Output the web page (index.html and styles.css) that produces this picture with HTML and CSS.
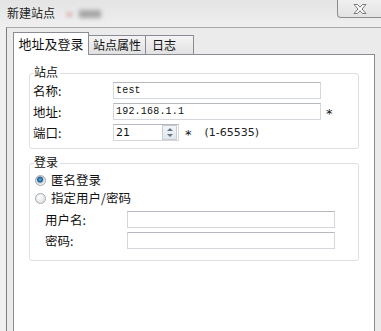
FILE: index.html
```html
<!DOCTYPE html>
<html lang="zh-CN">
  <head>
    <meta charset="UTF-8" />
    <meta name="viewport" content="width=device-width, initial-scale=1.0" />
    <title>新建站点</title>
    <link rel="stylesheet" href="styles.css">
  </head>
  <body>
    <div class="titlebar">
      <span class="title">新建站点</span>
      <span class="smudge"><i class="red"></i><i class="grey"></i></span>
      <div class="close">
        <svg width="16" height="12" viewBox="0 0 16 12">
          <path d="M2 1.5 L5.5 1.5 L8 4.2 L10.5 1.5 L14 1.5 L10 6 L14 10.5 L10.5 10.5 L8 7.8 L5.5 10.5 L2 10.5 L6 6 Z"
            fill="#fafafa" stroke="#7a7a7a" stroke-width="1" stroke-linejoin="round" />
        </svg>
      </div>
    </div>

    <div class="frame">
      <div class="tabs">
        <div class="tab active">地址及登录</div>
        <div class="tab site-tab">站点属性</div>
        <div class="tab log-tab">日志</div>
      </div>

      <div class="pane">
        <div class="group site">
          <div class="group-title">站点</div>
          <div class="row">
            <span class="label">名称:</span>
            <div class="field mono">test</div>
          </div>
          <div class="row">
            <span class="label">地址:</span>
            <div class="field mono">192.168.1.1</div>
            <span class="star">*</span>
          </div>
          <div class="row">
            <span class="label">端口:</span>
            <div class="field port">
              <span>21</span>
              <div class="spin">
                <span class="up"></span>
                <span class="down"></span>
              </div>
            </div>
            <span class="star port-star">*</span>
            <span class="range">(1-65535)</span>
          </div>
        </div>

        <div class="group login">
          <div class="group-title">登录</div>
          <div class="radio-row">
            <span class="radio checked"></span>
            <span>匿名登录</span>
          </div>
          <div class="radio-row">
            <span class="radio"></span>
            <span>指定用户/密码</span>
          </div>
          <div class="sub">
            <div class="row">
              <span class="label sub-label">用户名:</span>
              <div class="field"></div>
            </div>
            <div class="row">
              <span class="label sub-label">密码:</span>
              <div class="field"></div>
            </div>
          </div>
        </div>
      </div>
    </div>
  </body>
</html>
```

FILE: styles.css
```css
body {
  margin: 0;
  width: 381px;
  height: 331px;
  overflow: hidden;
  background-color: #f0f0f0;
  font-family: "Noto Sans CJK SC", "DejaVu Sans", sans-serif;
  font-size: 12px;
  color: #111;
}

.titlebar {
  display: flex;
  align-items: flex-start;
  height: 27px;
  background: linear-gradient(#e4e4e4, #efefef);
}

.title {
  margin: 5px 0 0 7px;
  line-height: 16px;
  color: #222;
}

.smudge {
  display: flex;
  align-items: center;
  gap: 7px;
  margin: 10px 0 0 12px;
  filter: blur(2px);
}

.smudge .red {
  width: 5px;
  height: 3px;
  background: #d88c8c;
}

.smudge .grey {
  width: 22px;
  height: 8px;
  background: #a5a5a5;
}

.close {
  display: flex;
  align-items: center;
  justify-content: center;
  margin-left: auto;
  width: 43px;
  height: 17px;
  border-left: 1px solid #8c8c8c;
  border-bottom: 1px solid #8c8c8c;
  border-bottom-left-radius: 4px;
  background: linear-gradient(#f0f0f0, #e2e2e2);
}

.frame {
  margin-left: 6px;
  padding-left: 6px;
  border-left: 1px solid #7d7d7d;
  border-top: 1px solid #a8a8a8;
  background: #ebebeb;
}

.tabs {
  display: flex;
  align-items: flex-end;
  height: 26px;
}

.tab {
  height: 19px;
  line-height: 18px;
  padding: 0 2px;
  border: 1px solid #898c95;
  border-bottom: none;
  border-left: none;
  background: linear-gradient(#f4f4f4, #e1e1e1);
  text-align: center;
  box-sizing: border-box;
}

.tab.active {
  position: relative;
  z-index: 1;
  width: 76px;
  height: 23px;
  line-height: 22px;
  margin-bottom: -1px;
  border-left: 1px solid #898c95;
  background: #fff;
  font-size: 13px;
}

.site-tab {
  width: 57px;
}

.log-tab {
  width: 48px;
  text-align: left;
  padding-left: 6px;
}

.pane {
  width: 362px;
  height: 290px;
  box-sizing: border-box;
  border: 1px solid #898c95;
  background: #fff;
  padding-top: 18px;
}

.group {
  width: 330px;
  margin-left: 15px;
  box-sizing: border-box;
  border: 1px solid #dcdfe3;
  border-radius: 3px;
  padding: 0 3px;
}

.site {
  padding-bottom: 7px;
}

.login {
  margin-top: 14px;
  padding-bottom: 11px;
}

.group-title {
  width: fit-content;
  height: 14px;
  margin: -9px 0 3px 1px;
  padding: 0 2px 0 0;
  line-height: 14px;
  background: #fff;
  font-size: 12px;
}

.login .group-title {
  margin-bottom: 4px;
}

.row {
  display: flex;
  align-items: center;
  height: 17px;
  margin-bottom: 4px;
}

.row:last-child {
  margin-bottom: 0;
}

.label {
  width: 80px;
  flex-shrink: 0;
  line-height: 15px;
  font-size: 12.5px;
}

.field {
  display: flex;
  align-items: center;
  width: 208px;
  height: 17px;
  box-sizing: border-box;
  padding-left: 2px;
  border: 1px solid #d4d7dc;
  border-top-color: #b5b8be;
  background: #fff;
}

.mono {
  font-family: "Liberation Mono", monospace;
  font-size: 10px;
  letter-spacing: 0.2px;
}

.star {
  margin-left: 5px;
  padding-top: 4px;
  line-height: 13px;
  font-family: "DejaVu Sans", sans-serif;
  font-size: 13px;
}

.port {
  width: 66px;
  padding-right: 1px;
  font-family: "DejaVu Sans", sans-serif;
  font-size: 11px;
}

.spin {
  display: flex;
  flex-direction: column;
  margin-left: auto;
  width: 13px;
  height: 13px;
  border: 1px solid #c6ccd4;
  background: linear-gradient(#f2f5f8, #dfe6ee);
}

.spin span {
  flex: 1;
  display: flex;
  align-items: center;
  justify-content: center;
}

.spin .up::before {
  content: "";
  border: 3px solid transparent;
  border-bottom: 3px solid #6a7480;
  border-top: none;
}

.spin .down::before {
  content: "";
  border: 3px solid transparent;
  border-top: 3px solid #6a7480;
  border-bottom: none;
}

.port-star {
  margin-left: 6px;
}

.range {
  margin-left: 13px;
  font-family: "DejaVu Sans", sans-serif;
  font-size: 11px;
  color: #222;
}

.radio-row {
  display: flex;
  align-items: center;
  height: 14px;
  margin-bottom: 4px;
  padding-left: 2px;
  gap: 5px;
  line-height: 14px;
  font-size: 12.5px;
}

.radio {
  width: 11px;
  height: 11px;
  box-sizing: border-box;
  border-radius: 50%;
  border: 1px solid #a4a8ad;
  background: radial-gradient(circle at 40% 35%, #fff, #d6d8db);
}

.radio.checked {
  background: radial-gradient(circle at 45% 40%, #6fb0dc 0, #1b5f91 2.5px, #cfd6dd 3.5px, #eef0f2 5px);
}

.sub {
  margin-top: 6px;
  padding-left: 12px;
}

.sub-label {
  width: 82px;
}
```
